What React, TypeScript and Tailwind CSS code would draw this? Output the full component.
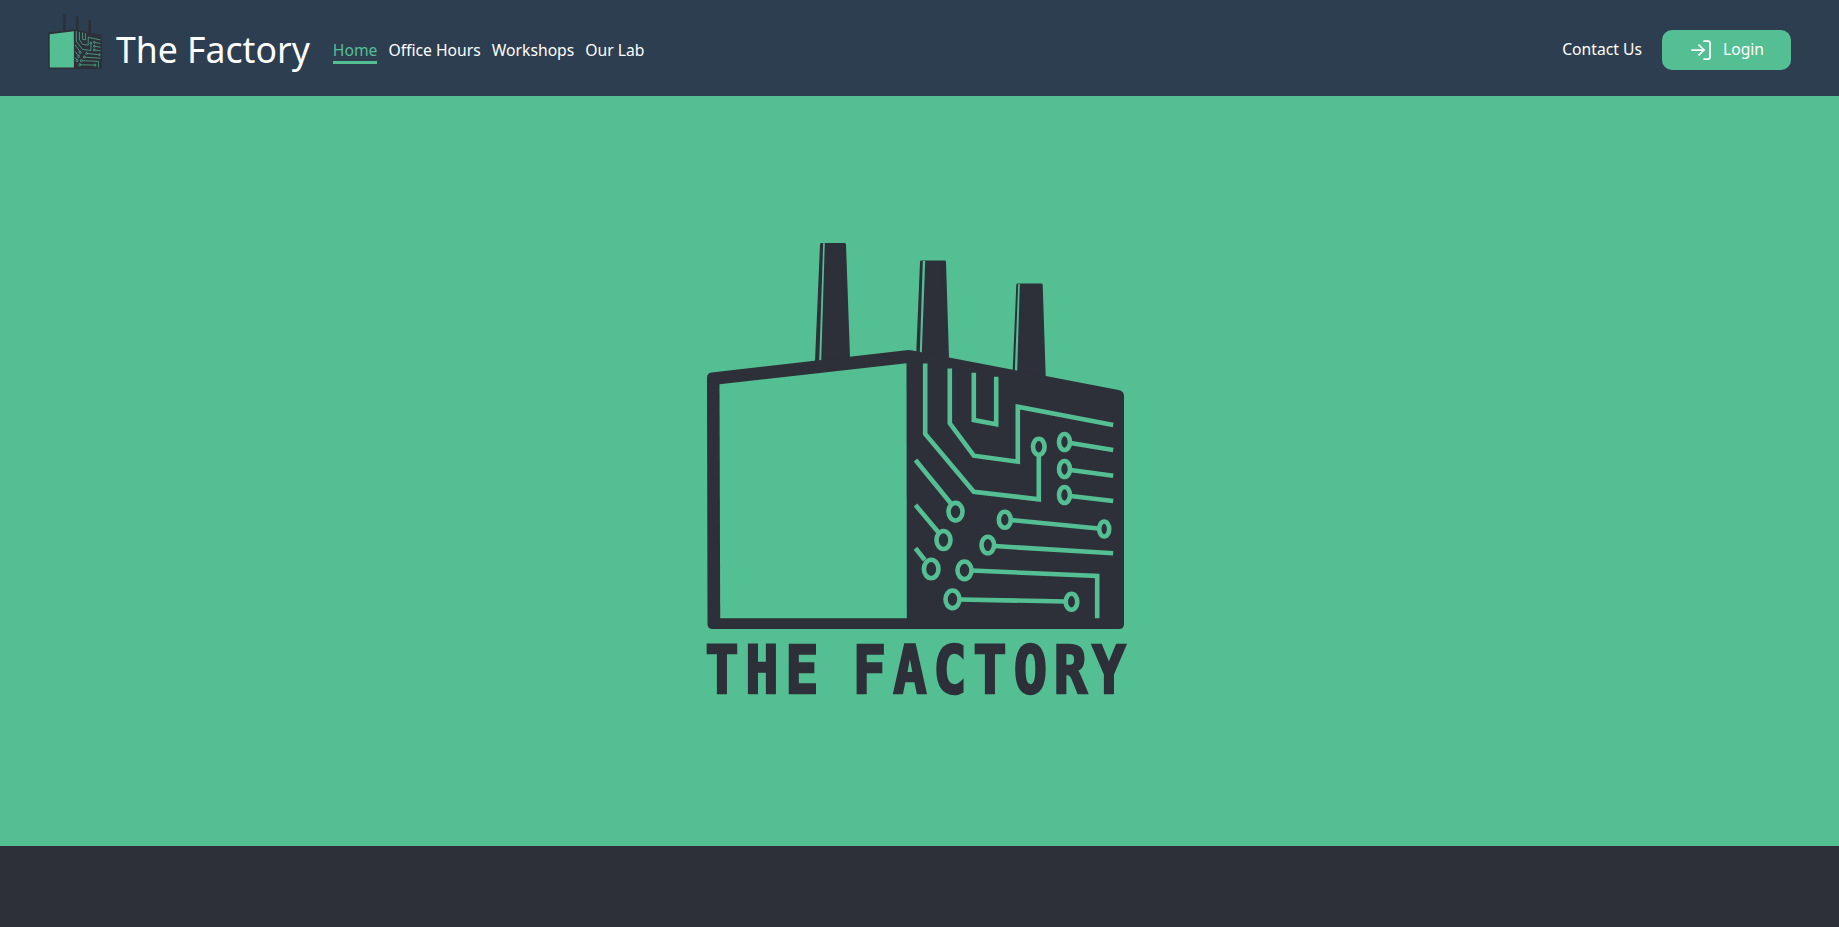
import React from 'react';
import { LogIn } from 'lucide-react';

const DARK = '#2d3039';
const GREEN = '#55bf94';

const chimneys = [
  { body: '816,361 821,244.5 844,244.5 848,357', slit: '822.7,243 824.3,243 820.7,361.5 818.7,361.5', thin: 'M832 243 L832 362' },
  { body: '917.3,351 921,262 944,262 947,358', slit: '922.3,261 924.7,261 921.3,353 919.3,353', thin: 'M932 261 L932 355' },
  { body: '1013.7,370 1017.3,285 1040.7,285 1043.7,376', slit: '1017.7,284 1019.3,284 1016.7,371 1014.3,371', thin: 'M1029 284 L1029 372' },
];

// [cx, cy, rx, ry] of the circuit pads
const pads = [
  [1038.3, 446.7, 5.8, 8],
  [1064, 442, 5.5, 8],
  [1064, 469, 5.5, 8],
  [1064, 495, 5.5, 8],
  [1004.3, 519.7, 6, 8],
  [1103.7, 529, 5, 7.5],
  [987.3, 545, 6.3, 8.3],
  [964, 570.3, 7, 8.8],
  [952, 599.3, 7, 8.8],
  [1071, 601.7, 5.8, 8],
  [955, 511.7, 7, 8.8],
  [943, 540, 7, 9],
  [930.7, 569, 7.3, 9.2],
];

const traces = [
  'M924.7 363.5 V434 L973.3 491.7 L1038.3 499.3 V455',
  'M949.3 368.5 V423.3 L973.3 455.7 L1017.3 461.7 V406.7 L1112.7 425',
  'M973.3 372.7 V420 L995.7 424.3 V376.7',
  'M1070 443 L1112.7 450',
  'M1070 470 L1112.7 475.7',
  'M1070 496 L1112.7 501',
  'M1010 520 L1098 528.5',
  'M994 546 L1112.7 553.3',
  'M971 570.5 L1096.7 576 V618.3',
  'M959 599.5 L1065 601.5',
  'M915 460 L950 503',
  'M915 505 L938.3 532.7',
  'M915 548.3 L924.3 560',
];

const FactoryMark: React.FC<{ small?: boolean }> = ({ small }) => (
  <>
    {chimneys.map((c) =>
      small ? (
        <path key={c.thin} d={c.thin} stroke={DARK} strokeWidth={20} fill="none" />
      ) : (
        <g key={c.body}>
          <polygon points={c.body} fill={DARK} stroke={DARK} strokeWidth={3} strokeLinejoin="round" />
          <polygon points={c.slit} fill={GREEN} />
        </g>
      ),
    )}
    <path
      d="M706.5 378 Q706.5 373 711 372.5 L908 350 L912 350.5 L1118 390 Q1123.5 391 1123.5 396 V624 Q1123.5 629 1118.5 629 H712 Q707 629 707 624 Z"
      fill={DARK}
    />
    <polygon points="719,384.3 906,363.3 906.3,618.3 719.7,618.3" fill={GREEN} />
    <g fill="none" stroke={GREEN} strokeWidth={small ? 5 : 4.6}>
      {traces.map((d) => (
        <path key={d} d={d} />
      ))}
      {pads.map(([cx, cy, rx, ry]) => (
        <ellipse key={`${cx}-${cy}`} cx={cx} cy={cy} rx={rx} ry={ry} />
      ))}
    </g>
  </>
);

const NavLink: React.FC<{ label: string; active?: boolean }> = ({ label, active }) => (
  <a
    className={
      active
        ? 'text-[#55bf94] border-b-[3px] border-[#55bf94] pt-[3px] leading-[21px]'
        : 'text-white border-b-[3px] border-transparent pt-[3px] leading-[21px]'
    }
  >
    {label}
  </a>
);

export default function App() {
  return (
    <div className="h-screen flex flex-col font-['Noto_Sans',sans-serif]">
      {/* Top bar */}
      <header className="h-24 shrink-0 bg-[#2c3e50] flex items-center justify-between pl-12 pr-12">
        <div className="flex items-center">
          <svg viewBox="706 243 418 386" preserveAspectRatio="none" className="w-[54px] h-[55px] mt-[-13px]">
            <FactoryMark small />
          </svg>
          <span className="ml-[14px] mt-[3px] text-[35.6px] leading-none text-white">The Factory</span>
          <nav className="ml-[23px] flex items-center gap-[11px] text-[15.7px] mt-1">
            <NavLink label="Home" active />
            <NavLink label="Office Hours" />
            <NavLink label="Workshops" />
            <NavLink label="Our Lab" />
          </nav>
        </div>
        <div className="flex items-center mt-1">
          <span className="text-white text-[15.7px]">Contact Us</span>
          <button className="ml-5 w-[129px] h-10 rounded-[10px] bg-[#55bf94] text-white text-[15.7px] flex items-center justify-center gap-[10px]">
            <LogIn className="w-6 h-6" strokeWidth={1.75} />
            Login
          </button>
        </div>
      </header>

      {/* Hero logo */}
      <main className="flex-1 bg-[#55bf94] flex items-center justify-center">
        <svg viewBox="689.5 231 460 480" className="w-[460px] h-[480px]">
          <FactoryMark />
          <text
            transform="scale(0.84 1)"
            y={693.5}
            textAnchor="middle"
            fontFamily="'DejaVu Sans Mono', monospace"
            fontWeight={700}
            fontSize={66}
            fill={DARK}
            stroke={DARK}
            strokeWidth={2.5}
            x={[721.5, 761.5, 801.5, 836, 869, 909.5, 949.5, 989.5, 1030, 1070, 1108.5].map((x) => x / 0.84).join(' ')}
          >
            THE FACTORY
          </text>
        </svg>
      </main>

      {/* Footer */}
      <footer className="h-[81px] shrink-0 bg-[#2d3039]" />
    </div>
  );
}
